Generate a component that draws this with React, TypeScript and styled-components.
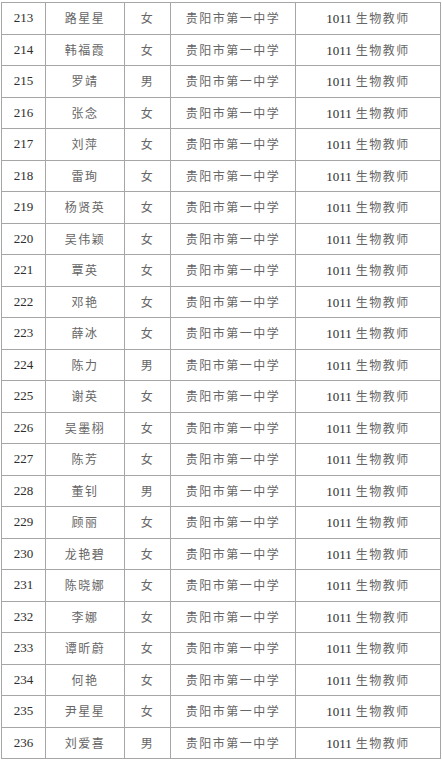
import React from 'react';
import styled, { createGlobalStyle } from 'styled-components';

const GlobalStyle = createGlobalStyle`
  html, body {
    margin: 0;
    padding: 0;
    background: #ffffff;
  }
`;

const Page = styled.div`
  padding: 2px 0 0 1px;
  font-family: "Liberation Serif", "Noto Sans CJK SC", serif;
`;

const Table = styled.table`
  width: 439px;
  table-layout: fixed;
  border-collapse: collapse;
`;

const Col = styled.col<{ $w: number }>`
  width: ${(p) => p.$w}px;
`;

const Row = styled.tr`
  height: 31.5px;
`;

const Cell = styled.td<{ $cjk?: boolean }>`
  border: 1px solid #a6a6a6;
  padding: 0;
  text-align: center;
  vertical-align: middle;
  font-size: 12px;
  color: ${(p) => (p.$cjk ? '#666666' : '#333333')};
  letter-spacing: ${(p) => (p.$cjk ? '1.5px' : '0')};
  white-space: nowrap;
`;

const Num = styled.span<{ $gap?: boolean }>`
  color: #2e2e2e;
  font-size: 13px;
  letter-spacing: 0;
  margin-right: ${(p) => (p.$gap ? '4px' : '0')};
`;

const names = [
  ['路星星', '女'], ['韩福霞', '女'], ['罗靖', '男'], ['张念', '女'],
  ['刘萍', '女'], ['雷珣', '女'], ['杨贤英', '女'], ['吴伟颖', '女'],
  ['覃英', '女'], ['邓艳', '女'], ['薛冰', '女'], ['陈力', '男'],
  ['谢英', '女'], ['吴墨栩', '女'], ['陈芳', '女'], ['董钊', '男'],
  ['顾丽', '女'], ['龙艳碧', '女'], ['陈晓娜', '女'], ['李娜', '女'],
  ['谭昕蔚', '女'], ['何艳', '女'], ['尹星星', '女'], ['刘爱喜', '男'],
];

const App = () => {
  return (
    <Page>
      <GlobalStyle />
      <Table>
        <colgroup>
          <Col $w={44} />
          <Col $w={79} />
          <Col $w={46} />
          <Col $w={125} />
          <Col $w={145} />
        </colgroup>
        <tbody>
          {names.map(([name, sex], i) => (
            <Row key={i}>
              <Cell><Num>{213 + i}</Num></Cell>
              <Cell $cjk>{name}</Cell>
              <Cell $cjk>{sex}</Cell>
              <Cell $cjk>贵阳市第一中学</Cell>
              <Cell $cjk><Num $gap>1011</Num>生物教师</Cell>
            </Row>
          ))}
        </tbody>
      </Table>
    </Page>
  );
};

export default App;
